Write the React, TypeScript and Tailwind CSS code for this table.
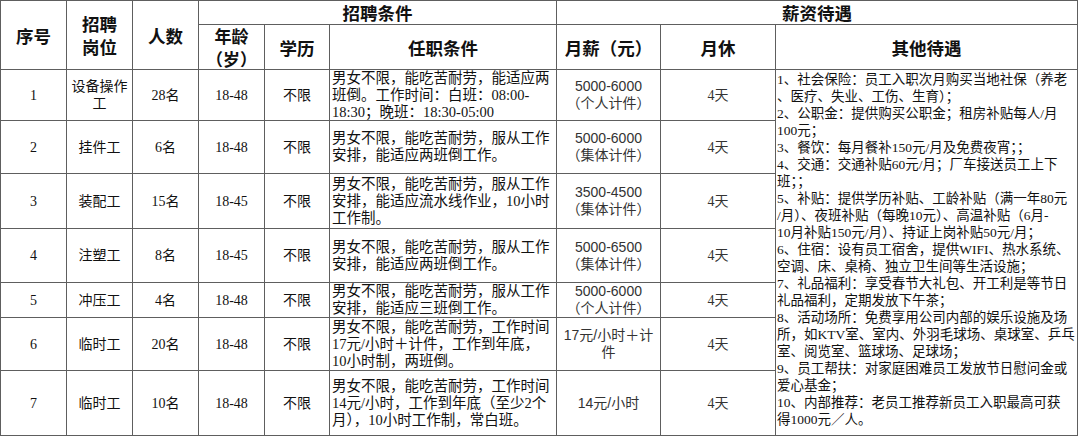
import React from "react";

type Row = {
  no: string;
  pos: string[];
  count: string;
  age: string;
  req: string[];
  pay: string[];
};

const rows: Row[] = [
  {
    no: "1",
    pos: ["设备操作", "工"],
    count: "28名",
    age: "18-48",
    req: ["男女不限，能吃苦耐劳，能适应两", "班倒。工作时间：白班：08:00-", "18:30；晚班：18:30-05:00"],
    pay: ["5000-6000", "（个人计件）"],
  },
  {
    no: "2",
    pos: ["挂件工"],
    count: "6名",
    age: "18-48",
    req: ["男女不限，能吃苦耐劳，服从工作", "安排，能适应两班倒工作。"],
    pay: ["5000-6000", "（集体计件）"],
  },
  {
    no: "3",
    pos: ["装配工"],
    count: "15名",
    age: "18-45",
    req: ["男女不限，能吃苦耐劳，服从工作", "安排，能适应流水线作业，10小时", "工作制。"],
    pay: ["3500-4500", "（集体计件）"],
  },
  {
    no: "4",
    pos: ["注塑工"],
    count: "8名",
    age: "18-45",
    req: ["男女不限，能吃苦耐劳，服从工作", "安排，能适应两班倒工作。"],
    pay: ["5000-6500", "（集体计件）"],
  },
  {
    no: "5",
    pos: ["冲压工"],
    count: "4名",
    age: "18-48",
    req: ["男女不限，能吃苦耐劳，服从工作", "安排，能适应三班倒工作。"],
    pay: ["5000-6000", "（个人计件）"],
  },
  {
    no: "6",
    pos: ["临时工"],
    count: "20名",
    age: "18-48",
    req: ["男女不限，能吃苦耐劳，工作时间", "17元/小时＋计件，工作到年底，", "10小时制，两班倒。"],
    pay: ["17元/小时＋计", "件"],
  },
  {
    no: "7",
    pos: ["临时工"],
    count: "10名",
    age: "18-48",
    req: ["男女不限，能吃苦耐劳，工作时间", "14元/小时，工作到年底（至少2个", "月），10小时工作制，常白班。"],
    pay: ["14元/小时"],
  },
];

const benefits = [
  "1、社会保险：员工入职次月购买当地社保（养老",
  "、医疗、失业、工伤、生育）；",
  "2、公职金：提供购买公职金；租房补贴每人/月",
  "100元；",
  "3、餐饮：每月餐补150元/月及免费夜宵；；",
  "4、交通：交通补贴60元/月；厂车接送员工上下",
  "班；；",
  "5、补贴：提供学历补贴、工龄补贴（满一年80元",
  "/月）、夜班补贴（每晚10元）、高温补贴（6月-",
  "10月补贴150元/月）、持证上岗补贴50元/月；",
  "6、住宿：设有员工宿舍，提供WIFI、热水系统、",
  "空调、床、桌椅、独立卫生间等生活设施；",
  "7、礼品福利：享受春节大礼包、开工利是等节日",
  "礼品福利，定期发放下午茶；",
  "8、活动场所：免费享用公司内部的娱乐设施及场",
  "所，如KTV室、室内、外羽毛球场、桌球室、乒乓",
  "室、阅览室、篮球场、足球场；",
  "9、员工帮扶：对家庭困难员工发放节日慰问金或",
  "爱心基金；",
  "10、内部推荐：老员工推荐新员工入职最高可获",
  "得1000元／人。",
];

const head =
  "bg-white flex flex-col items-center justify-center font-bold text-[17.5px] leading-[23px] text-[#111] font-['Noto_Sans_CJK_SC',sans-serif]";
const cell = "bg-white flex flex-col items-center justify-center text-[14px] leading-[17px] text-[#111]";

export default function App() {
  return (
    <div className="min-h-[437px] bg-white font-['Liberation_Serif','Noto_Sans_CJK_SC',serif]">
      <div className="grid w-[1078px] gap-px bg-[#5e5e5e] border border-[#5e5e5e] grid-cols-[65px_65px_65px_65px_64px_226px_103px_114px_301px] grid-rows-[23px_44px_50px_52px_54px_53px_34px_52px_64px]">
        {/* header */}
        <div className={`${head} row-span-2`}>序号</div>
        <div className={`${head} row-span-2`}>
          <span>招聘</span>
          <span>岗位</span>
        </div>
        <div className={`${head} row-span-2`}>人数</div>
        <div className={`${head} col-span-3`}>招聘条件</div>
        <div className={`${head} col-span-3`}>薪资待遇</div>
        <div className={`${head} text-[17px] leading-[20px]`}>
          <span>年龄</span>
          <span>（岁）</span>
        </div>
        <div className={head}>学历</div>
        <div className={head}>任职条件</div>
        <div className={head}>月薪（元）</div>
        <div className={head}>月休</div>
        <div className={head}>其他待遇</div>

        {rows.map((r, i) => (
          <React.Fragment key={r.no}>
            <div className={cell}>{r.no}</div>
            <div className={`${cell} text-[14.5px]`}>
              {r.pos.map((p) => (
                <span key={p}>{p}</span>
              ))}
            </div>
            <div className={cell}>{r.count}</div>
            <div className={`${cell} text-[14.5px]`}>{r.age}</div>
            <div className={`${cell} text-[14.5px]`}>不限</div>
            <div className="bg-white flex flex-col justify-center pl-0.5 text-[14.5px] leading-[17px] text-[#111] whitespace-nowrap overflow-hidden">
              {r.req.map((t) => (
                <span key={t}>{t}</span>
              ))}
            </div>
            <div className={`${cell} text-[13.5px] text-[#333] font-['Liberation_Sans','Noto_Sans_CJK_SC',sans-serif]`}>
              {r.pay.map((t) => (
                <span key={t}>{t}</span>
              ))}
            </div>
            <div className={`${cell} text-[#333]`}>4天</div>
            {i === 0 && (
              <div className="bg-white row-span-7 flex flex-col pl-px pt-px text-[13.5px] leading-[17px] text-[#111] whitespace-nowrap overflow-hidden">
                {benefits.map((b) => (
                  <span key={b}>{b}</span>
                ))}
              </div>
            )}
          </React.Fragment>
        ))}
      </div>
    </div>
  );
}
